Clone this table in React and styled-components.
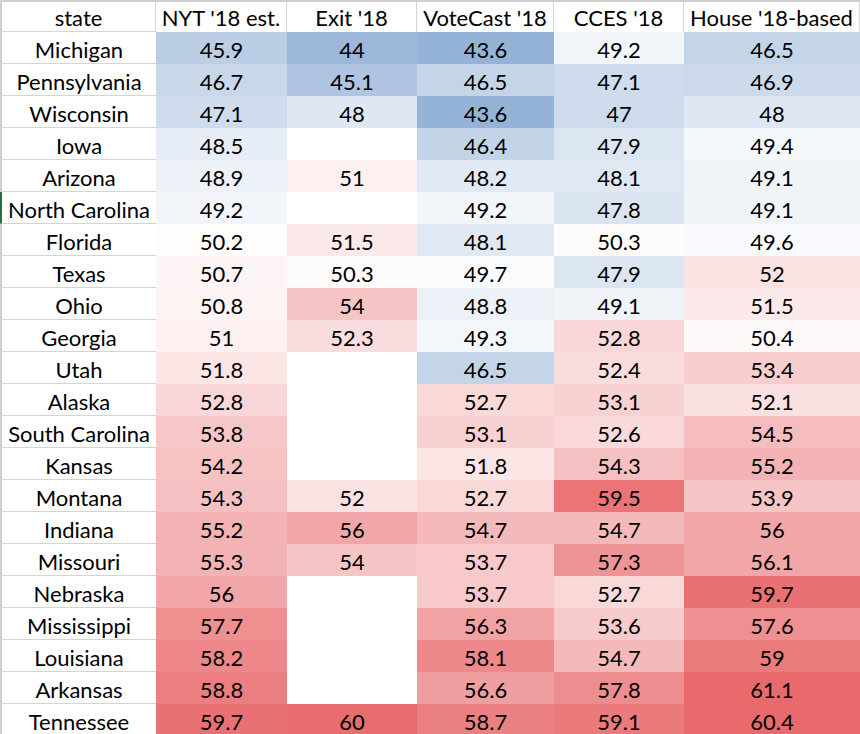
import React from 'react';
import styled, {createGlobalStyle} from 'styled-components';

const GlobalStyle = createGlobalStyle`
    html, body {
        margin: 0;
        padding: 0;
        background: #fff;
    }
    body {
        font-family: Lato, "Open Sans", "Liberation Sans", sans-serif;
        overflow: hidden;
    }
`;

const GRID = '#d4d4d4';
const COLS = '156px 131px 130px 137px 130px 176px';

const Sheet = styled.div`
    width: 860px;
    height: 734px;
    overflow: hidden;
    border-top: 2px solid #cfcfcf;
    box-sizing: border-box;
`;

const Row = styled.div`
    display: grid;
    grid-template-columns: ${COLS};
    height: ${(p) => (p.$head ? '30px' : '32px')};
`;

const Cell = styled.div`
    display: flex;
    align-items: center;
    justify-content: center;
    box-sizing: border-box;
    padding-top: 3px;
    font-size: 22px;
    color: #000;
    white-space: nowrap;
`;

const HeaderCell = styled(Cell)`
    background: #fff;
    border-right: 1px solid ${GRID};
    border-bottom: 1px solid ${(p) => (p.$first ? GRID : '#fff')};
    border-left: ${(p) => (p.$first ? '2px solid #cfcfcf' : 'none')};
    padding-top: 1px;
`;

const StateCell = styled(Cell)`
    background: #fff;
    border-bottom: 1px solid ${GRID};
    border-left: 2px solid ${(p) => (p.$active ? '#217346' : '#cfcfcf')};
`;

const ValueCell = styled(Cell)`
    background: ${(p) => p.$fill};
`;

const headers = ['state', "NYT '18 est.", "Exit '18", "VoteCast '18", "CCES '18", "House '18-based"];

const rows = [
    ['Michigan', 45.9, 44, 43.6, 49.2, 46.5],
    ['Pennsylvania', 46.7, 45.1, 46.5, 47.1, 46.9],
    ['Wisconsin', 47.1, 48, 43.6, 47, 48],
    ['Iowa', 48.5, null, 46.4, 47.9, 49.4],
    ['Arizona', 48.9, 51, 48.2, 48.1, 49.1],
    ['North Carolina', 49.2, null, 49.2, 47.8, 49.1],
    ['Florida', 50.2, 51.5, 48.1, 50.3, 49.6],
    ['Texas', 50.7, 50.3, 49.7, 47.9, 52],
    ['Ohio', 50.8, 54, 48.8, 49.1, 51.5],
    ['Georgia', 51, 52.3, 49.3, 52.8, 50.4],
    ['Utah', 51.8, null, 46.5, 52.4, 53.4],
    ['Alaska', 52.8, null, 52.7, 53.1, 52.1],
    ['South Carolina', 53.8, null, 53.1, 52.6, 54.5],
    ['Kansas', 54.2, null, 51.8, 54.3, 55.2],
    ['Montana', 54.3, 52, 52.7, 59.5, 53.9],
    ['Indiana', 55.2, 56, 54.7, 54.7, 56],
    ['Missouri', 55.3, 54, 53.7, 57.3, 56.1],
    ['Nebraska', 56, null, 53.7, 52.7, 59.7],
    ['Mississippi', 57.7, null, 56.3, 53.6, 57.6],
    ['Louisiana', 58.2, null, 58.1, 54.7, 59],
    ['Arkansas', 58.8, null, 56.6, 57.8, 61.1],
    ['Tennessee', 59.7, 60, 58.7, 59.1, 60.4],
];

const BLUE = [149, 178, 215];
const RED = [232, 106, 108];
const MID = 50;

// three-colour scale: blue (low) -> white (50) -> red (high)
const scaleColor = (v) => {
    if (v == null) return '#fff';
    let end, t;
    if (v < MID) {
        end = BLUE;
        t = Math.min(1, (MID - v) / (MID - 43.6));
    } else {
        end = RED;
        t = Math.min(1, (v - MID) / (60.2 - MID));
    }
    const c = end.map((e) => Math.round(255 + (e - 255) * t));
    return `rgb(${c[0]}, ${c[1]}, ${c[2]})`;
};

const App = () => {
    return (
        <>
            <GlobalStyle/>
            <Sheet>
                <Row $head>
                    {headers.map((h, i) => (
                        <HeaderCell key={h} $first={i === 0}>{h}</HeaderCell>
                    ))}
                </Row>
                {rows.map(([state, ...vals]) => (
                    <Row key={state}>
                        <StateCell $active={state === 'North Carolina'}>{state}</StateCell>
                        {vals.map((v, i) => (
                            <ValueCell key={i} $fill={scaleColor(v)}>
                                {v == null ? '' : v}
                            </ValueCell>
                        ))}
                    </Row>
                ))}
            </Sheet>
        </>
    );
};

export default App;
